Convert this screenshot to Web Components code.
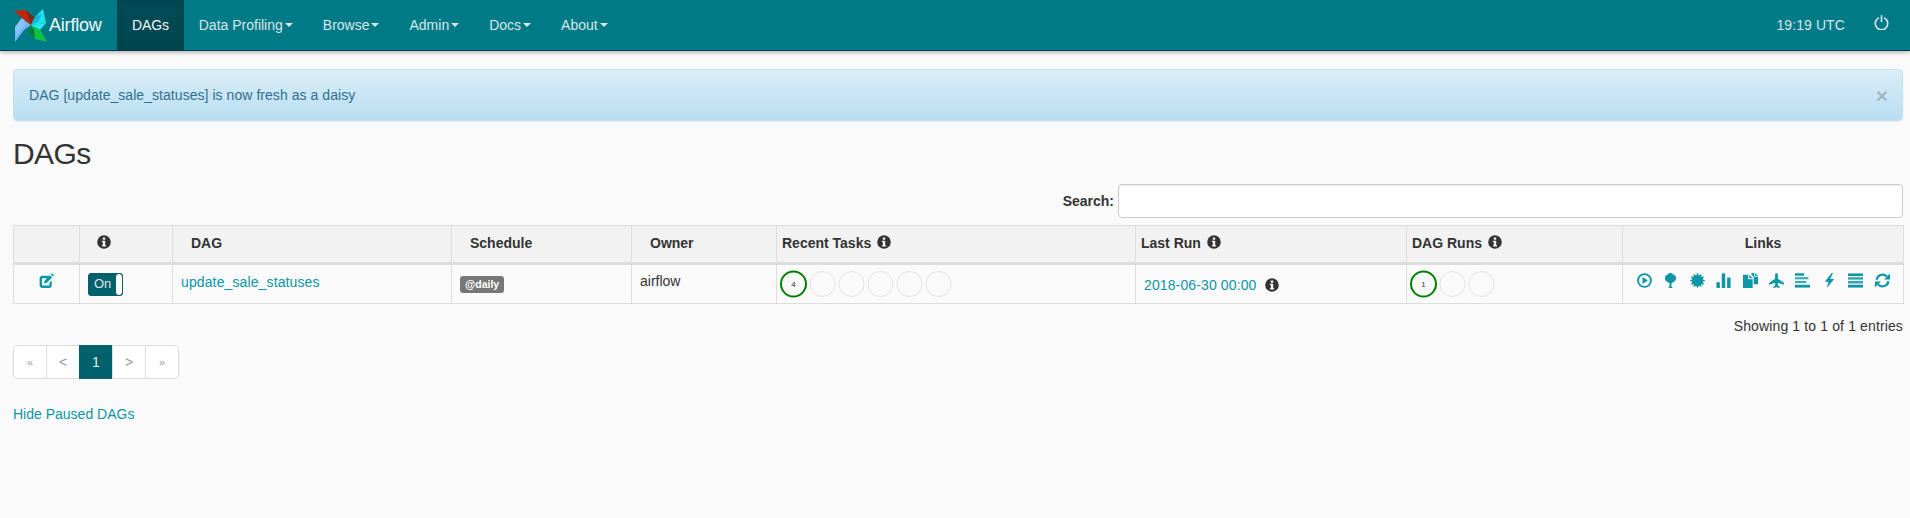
<!DOCTYPE html>
<html>
<head>
<meta charset="utf-8">
<title>Airflow - DAGs</title>
<style>
  html, body { margin: 0; padding: 0; height: 100%; }
  body { background: #fafafa; color: #333; font: 14px/20px "Liberation Sans", Arial, sans-serif; overflow: hidden; }
</style>
</head>
<body>
<af-navbar>
  <nav-link active>DAGs</nav-link>
  <nav-link caret>Data Profiling</nav-link>
  <nav-link caret>Browse</nav-link>
  <nav-link caret>Admin</nav-link>
  <nav-link caret>Docs</nav-link>
  <nav-link caret>About</nav-link>
</af-navbar>
<af-page>
  <af-alert>DAG [update_sale_statuses] is now fresh as a daisy</af-alert>
  <page-title>DAGs</page-title>
  <search-box></search-box>
  <dag-table></dag-table>
  <table-info>Showing 1 to 1 of 1 entries</table-info>
  <af-pager></af-pager>
  <hide-link>Hide Paused DAGs</hide-link>
</af-page>

<script>
// glifos dibujados a mano sobre una rejilla de 14x14
function dientes() {
  let pts = [];
  for (let i = 0; i < 24; i++) {
    const r = i % 2 ? 4.9 : 7.3, a = i * Math.PI / 12;
    pts.push((7 + r * Math.cos(a)).toFixed(2) + ',' + (7 + r * Math.sin(a)).toFixed(2));
  }
  return pts.join(' ');
}

const GLIFOS = {
  play: '<circle cx="7" cy="7" r="6" fill="none" stroke="currentColor" stroke-width="1.7"/><path d="M5.2 3.8 10.100 7l-4.900 3.200z"/>',
  tree: '<path d="M7 0c1.200 0 2.100.6 2.600 1.500C11 1.800 12.200 3.100 12.200 4.800c0 1.700-1 3-2.500 3.500-.4.5-1 .9-1.800 1v3.200l.9 1.100v.4H5.200v-.4l.9-1.100V9.300c-.8-.1-1.400-.5-1.800-1C2.800 7.800 1.800 6.500 1.800 4.800c0-1.700 1.200-3 2.600-3.300C4.900.6 5.800 0 7 0z"/>',
  cert: '<polygon points="' + dientes() + '"/>',
  bars: '<rect x=".4" y="8.600" width="3.200" height="5.400"/><rect x="5.400" y=".4" width="3.200" height="13.600"/><rect x="10.400" y="4.200" width="3.200" height="9.800"/>',
  dup: '<path d="M4.800 1.600H0V14h9V5.800H4.800z"/><path d="M5.800 1.600V4.800H9zM7.800 0v1.500l2.200 2.300v6.800H14V3.600H10.500V0zM11.400 0v2.700H14z"/>',
  plane: '<path d="M7 0c.9 0 1.300 1.100 1.300 2.400v3l5.700 3.900V11L8.300 9v2.600l1.700 1.300V14L7 13.200 4 14v-1.100l1.700-1.300V9L0 11V9.300l5.700-3.900v-3C5.700 1.100 6.100 0 7 0z"/>',
  left: '<rect y=".3" width="8.500" height="2.200"/><rect y="3.900" width="12.500" height="2" opacity=".8"/><rect y="7.400" width="10.500" height="2" opacity=".8"/><rect y="11" width="14" height="2.600"/>',
  flash: '<path d="M9 0 2.600 8.200H6L4.400 14 11.400 5.700H7.700L10.200 0z"/>',
  just: '<rect y=".4" width="14" height="2.400"/><rect y="3.900" width="14" height="2.300" opacity=".85"/><rect y="7.500" width="14" height="2.300" opacity=".85"/><rect y="11" width="14" height="2.600"/>',
  refresh: '<g fill="none" stroke="currentColor" stroke-width="2"><path d="M1.500 6.300A5.500 5.500 0 0 1 11 3.300"/><path d="M12.500 7.700A5.500 5.500 0 0 1 3 10.700"/></g><path d="M14 .5v5.500H8.500zM0 13.500V8h5.500z"/>',
  edit: '<path d="M9.800 2.600H2.900C1.600 2.600.6 3.600.6 4.900v6.700c0 1.300 1 2.300 2.300 2.300h6.700c1.300 0 2.300-1 2.300-2.300V7l-2.200 2.200v2.500H2.800V4.800h4.800z"/><path d="M4.600 9.800 5.300 7l4.900-5 2.100 2.100-4.900 5zM11 1.200 12 .2l2 2-1 1z"/>',
  info: '<path fill-rule="evenodd" d="M7 .2a6.800 6.800 0 1 1 0 13.600A6.800 6.800 0 0 1 7 .2zM5.800 2.600v2.100h2.400V2.600zM4.900 5.800v1.200h.9v3.200h-.9v1.200h4.200v-1.200h-.9V5.800z"/>',
  off: '<g fill="none" stroke="currentColor" stroke-width="1.500" stroke-linecap="round"><path d="M4.100 2.900a5.800 5.800 0 1 0 5.800 0"/><path d="M7 .8v5.200"/></g>'
};

class GlyIcon extends HTMLElement {
  constructor() {
    super();
    this.attachShadow({ mode: 'open' });
  }
  connectedCallback() {
    const s = this.getAttribute('size') || 14;
    this.shadowRoot.innerHTML = `<style>
      :host { display: inline-flex; width: ${s}px; height: ${s}px; vertical-align: -2px; }
      svg { width: 100%; height: 100%; fill: currentColor; display: block; }
    </style><svg viewBox="0 0 14 14">${GLIFOS[this.getAttribute('name')]}</svg>`;
  }
}
customElements.define('gly-icon', GlyIcon);

class NavLink extends HTMLElement {
  constructor() {
    super();
    this.attachShadow({ mode: 'open' }).innerHTML = `<style>
      :host { display: flex; align-items: center; height: 50px; padding: 0 15px; color: #d8e6e8; cursor: pointer; }
      :host([active]) { background: linear-gradient(#004d57, #00454f); color: #f4f8f8; box-shadow: inset 0 3px 9px rgba(0,0,0,.1); letter-spacing: -.15px; }
      .caret { display: none; width: 0; height: 0; margin-left: 2px; border-top: 4px solid; border-left: 4px solid transparent; border-right: 4px solid transparent; }
      :host([caret]) .caret { display: inline-block; }
    </style><slot></slot><span class="caret"></span>`;
  }
}
customElements.define('nav-link', NavLink);

class AfNavbar extends HTMLElement {
  constructor() {
    super();
    this.attachShadow({ mode: 'open' }).innerHTML = `<style>
      :host { display: flex; align-items: center; height: 50px; box-sizing: content-box; background: #007a87; border-bottom: 1px solid #003d44; box-shadow: 0 1px 5px rgba(0,0,0,.35); position: relative; }
      .brand { display: flex; align-items: center; width: 89px; padding-left: 14px; margin-right: 14px; color: #f4f8f8; flex: none; box-sizing: content-box; }
      .brand svg { width: 33px; height: 33px; flex: none; margin-right: 2px; }
      .brand span { font-size: 18px; letter-spacing: -.2px; }
      .links { display: flex; }
      .right { margin-left: auto; display: flex; align-items: center; color: #d8e6e8; }
      .clock { margin-right: 29px; letter-spacing: .1px; }
      .power { margin-right: 21px; display: flex; margin-top: -5px; }
    </style>
    <div class="brand">
      <svg viewBox="0 0 33 33">
        <polygon points="8,9 17,16 10,21 1,33 1,18" fill="#6fb4f5"/>
        <polygon points="1,18 8,9 12,15 2,27" fill="#8ac4fa"/>
        <polygon points="0,2 11,1 20,8 17,16 8,9" fill="#c4260a"/>
        <polygon points="11,1 20,8 17,16 13,5" fill="#7a2b1b"/>
        <polygon points="29,0 32,14 17,16 22,7" fill="#1fe3f5"/>
        <polygon points="22,7 28,5 24,13 17,16" fill="#12b8cf"/>
        <polygon points="17,16 27,22 33,33 21,30 14,23" fill="#0cc244"/>
        <polygon points="17,16 14,23 21,30 20,21" fill="#067a3a"/>
        <polygon points="17,16 32,14 26,21" fill="#25e9f0"/>
      </svg>
      <span>Airflow</span>
    </div>
    <div class="links"><slot></slot></div>
    <div class="right">
      <span class="clock">19:19 UTC</span>
      <span class="power"><gly-icon name="off" size="15"></gly-icon></span>
    </div>`;
  }
}
customElements.define('af-navbar', AfNavbar);

class AfPage extends HTMLElement {
  constructor() {
    super();
    this.attachShadow({ mode: 'open' }).innerHTML = `<style>
      :host { display: flex; flex-direction: column; padding: 18px 7px 0 13px; }
    </style><slot></slot>`;
  }
}
customElements.define('af-page', AfPage);

class AfAlert extends HTMLElement {
  constructor() {
    super();
    this.attachShadow({ mode: 'open' }).innerHTML = `<style>
      :host { display: flex; align-items: center; justify-content: space-between; box-sizing: border-box; height: 52px; padding: 0 14px 0 15px; border: 1px solid #bce3f0; border-radius: 4px; background: linear-gradient(#d9edf7, #b9def0); color: #31708f; box-shadow: inset 0 1px 0 rgba(255,255,255,.25), 0 1px 2px rgba(0,0,0,.05); letter-spacing: .05px; }
      .x { font-size: 21px; font-weight: bold; color: #000; opacity: .2; text-shadow: 0 1px 0 #fff; line-height: 1; }
    </style><span><slot></slot></span><span class="x">×</span>`;
  }
}
customElements.define('af-alert', AfAlert);

class PageTitle extends HTMLElement {
  constructor() {
    super();
    this.attachShadow({ mode: 'open' }).innerHTML = `<style>
      :host { display: block; margin-top: 16px; font-size: 30px; line-height: 33px; color: #333; letter-spacing: -.6px; }
    </style><slot></slot>`;
  }
}
customElements.define('page-title', PageTitle);

class SearchBox extends HTMLElement {
  constructor() {
    super();
    this.attachShadow({ mode: 'open' }).innerHTML = `<style>
      :host { display: flex; justify-content: flex-end; align-items: center; margin-top: 14px; }
      b { margin-right: 4px; }
      input { box-sizing: border-box; width: 785px; height: 34px; padding: 6px 12px; border: 1px solid #ccc; border-radius: 4px; background: #fff; font: inherit; box-shadow: inset 0 1px 1px rgba(0,0,0,.075); outline: none; }
    </style><b>Search:</b><input type="search">`;
  }
}
customElements.define('search-box', SearchBox);

class RunDots extends HTMLElement {
  constructor() {
    super();
    this.attachShadow({ mode: 'open' });
  }
  connectedCallback() {
    const n = +this.getAttribute('count');
    const total = +this.getAttribute('total');
    let dots = '';
    for (let i = 0; i < n; i++) {
      const activo = i === 0;
      dots += `<g><circle cx="${13.5 + i * 29}" cy="14" r="12.5" fill="none"
        stroke="${activo ? 'green' : '#e3e3e3'}" stroke-width="${activo ? 2 : 1}"/>
        ${activo ? `<text x="13.5" y="17" text-anchor="middle">${total}</text>` : ''}</g>`;
    }
    this.shadowRoot.innerHTML = `<style>
      :host { display: block; height: 28px; }
      svg { display: block; overflow: visible; }
      text { font: 8px "Liberation Sans", Arial, sans-serif; fill: #333; }
    </style><svg width="${n * 29}" height="28">${dots}</svg>`;
  }
}
customElements.define('run-dots', RunDots);

class OnSwitch extends HTMLElement {
  constructor() {
    super();
    this.attachShadow({ mode: 'open' }).innerHTML = `<style>
      :host { display: flex; box-sizing: border-box; width: 35px; height: 23px; border: 1px solid #00606b; border-radius: 3px; background: #00606b; overflow: hidden; }
      .on { flex: 1; color: #dfe9ea; padding-left: 5px; font-size: 13px; line-height: 19px; }
      .knob { width: 6px; background: #fff; border-radius: 3px; }
    </style><span class="on">On</span><span class="knob"></span>`;
  }
}
customElements.define('on-switch', OnSwitch);

class DagTable extends HTMLElement {
  constructor() {
    super();
    this.attachShadow({ mode: 'open' });
  }
  connectedCallback() {
    const enlaces = ['play','tree','cert','bars','dup','plane','left','flash','just','refresh']
      .map(n => `<gly-icon name="${n}" size="15"></gly-icon>`).join('');
    this.shadowRoot.innerHTML = `<style>
      :host { display: block; margin-top: 7px; }
      table { border-collapse: collapse; table-layout: fixed; width: 1890px; }
      th, td { border: 1px solid #ddd; padding: 0; text-align: left; box-sizing: border-box; }
      th { height: 38px; background: #f2f2f2; border-bottom: 3px solid #ddd; font-weight: bold; white-space: nowrap; padding-bottom: 2px; }
      th gly-icon { margin-left: 2px; vertical-align: -1px; }
      td { height: 40px; vertical-align: top; }
      a { color: #0a96a5; text-decoration: none; }
      .c { text-align: center; }
      .edit { color: #0a96a5; display: flex; justify-content: center; padding-top: 8px; }
      .sw { padding: 8px 0 0 8px; }
      .name { padding: 7px 0 0 8px; letter-spacing: .12px; }
      .lab { display: inline-block; background: #777; color: #fff; font-size: 10.5px; font-weight: bold; line-height: 11px; padding: 3px 5px; border-radius: 3px; margin: 11px 0 0 8px; }
      .own { padding: 6px 0 0 8px; }
      .dots { padding: 5px 0 0 3px; }
      .run { padding: 10px 0 0 8px; letter-spacing: .12px; }
      .run gly-icon { margin-left: 9px; color: #333; }
      .links { display: flex; gap: 11.4px; padding: 8px 0 0 14px; color: #0a96a5; }
    </style>
    <table>
      <colgroup>
        <col style="width:66px"><col style="width:93px"><col style="width:279px"><col style="width:180px">
        <col style="width:145px"><col style="width:359px"><col style="width:271px"><col style="width:216px"><col style="width:281px">
      </colgroup>
      <thead>
        <tr>
          <th></th>
          <th style="padding-left:15px"><gly-icon name="info"></gly-icon></th>
          <th style="padding-left:18px">DAG</th>
          <th style="padding-left:18px">Schedule</th>
          <th style="padding-left:18px">Owner</th>
          <th style="padding-left:5px">Recent Tasks <gly-icon name="info"></gly-icon></th>
          <th style="padding-left:5px">Last Run <gly-icon name="info"></gly-icon></th>
          <th style="padding-left:5px">DAG Runs <gly-icon name="info"></gly-icon></th>
          <th class="c">Links</th>
        </tr>
      </thead>
      <tbody>
        <tr>
          <td><span class="edit"><gly-icon name="edit" size="15"></gly-icon></span></td>
          <td class="sw"><on-switch></on-switch></td>
          <td class="name"><a href="#">update_sale_statuses</a></td>
          <td><span class="lab">@daily</span></td>
          <td class="own">airflow</td>
          <td class="dots"><run-dots count="6" total="4"></run-dots></td>
          <td class="run"><a href="#">2018-06-30 00:00</a><gly-icon name="info"></gly-icon></td>
          <td class="dots"><run-dots count="3" total="1"></run-dots></td>
          <td><div class="links">${enlaces}</div></td>
        </tr>
      </tbody>
    </table>`;
  }
}
customElements.define('dag-table', DagTable);

class TableInfo extends HTMLElement {
  constructor() {
    super();
    this.attachShadow({ mode: 'open' }).innerHTML = `<style>
      :host { display: block; text-align: right; margin-top: 12px; letter-spacing: .13px; }
    </style><slot></slot>`;
  }
}
customElements.define('table-info', TableInfo);

class AfPager extends HTMLElement {
  constructor() {
    super();
    this.attachShadow({ mode: 'open' }).innerHTML = `<style>
      :host { display: flex; width: max-content; margin-top: 9px; }
      span { box-sizing: border-box; width: 34px; height: 34px; display: flex; align-items: center; justify-content: center; background: #fff; border: 1px solid #ddd; margin-left: -1px; color: #999; }
      span:first-of-type { margin-left: 0; border-radius: 4px 0 0 4px; }
      span:last-of-type { border-radius: 0 4px 4px 0; }
      .now { background: #00606b; border-color: #00606b; color: #e8f0f1; }
      .sm { font-size: 11px; }
    </style><span class="sm">«</span><span>&lt;</span><span class="now">1</span><span>&gt;</span><span class="sm">»</span>`;
  }
}
customElements.define('af-pager', AfPager);

class HideLink extends HTMLElement {
  constructor() {
    super();
    this.attachShadow({ mode: 'open' }).innerHTML = `<style>
      :host { display: block; margin-top: 25px; color: #0a96a5; cursor: pointer; }
    </style><slot></slot>`;
  }
}
customElements.define('hide-link', HideLink);
</script>
</body>
</html>
